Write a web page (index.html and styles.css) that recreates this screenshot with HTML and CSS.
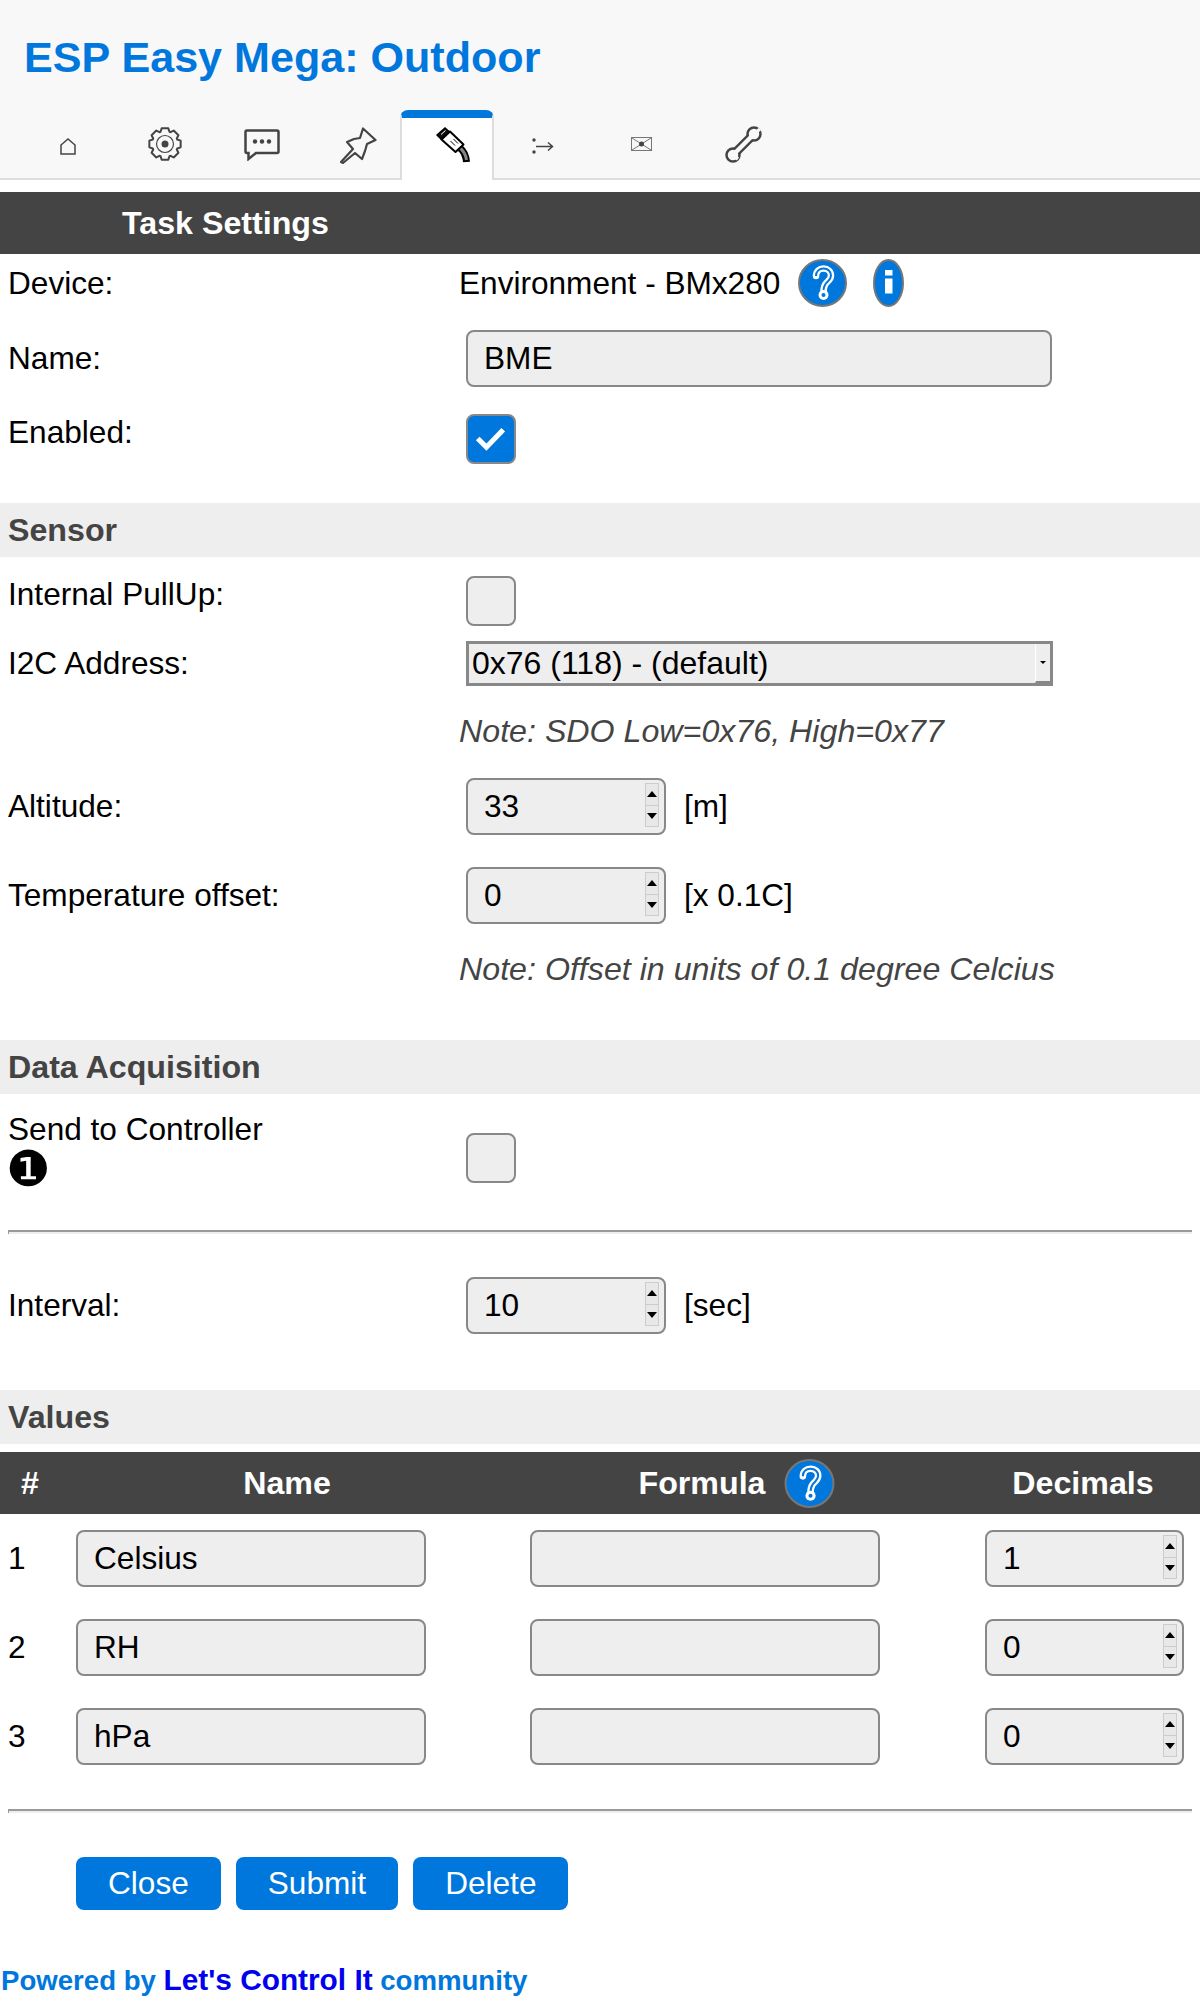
FILE: index.html
```html
<!DOCTYPE html>
<html lang="en">
<head>
    <meta charset="UTF-8">
    <meta name="viewport" content="width=device-width, initial-scale=1.0">
    <title>ESP Easy Mega: Outdoor</title>
    <link rel="stylesheet" href="styles.css">
</head>
<body>
    <svg class="defs" width="0" height="0">
        <symbol id="helpIcon" viewBox="0 0 49 48">
            <ellipse cx="24.5" cy="24" rx="23.5" ry="23" fill="#07d" stroke="#777" stroke-width="2"/>
            <path d="M18 17C18 12 21.500 9.500 25.500 9.500C30 9.500 33 12.500 33 16.500C33 21 29.500 22 27.500 25C26 27 25.500 29 25.500 33" fill="none" stroke="#fff" stroke-width="6.500" stroke-linecap="round"/>
            <path d="M18 17C18 12 21.500 9.500 25.500 9.500C30 9.500 33 12.500 33 16.500C33 21 29.500 22 27.500 25C26 27 25.500 29 25.500 33" fill="none" stroke="#07d" stroke-width="2"/>
            <circle cx="25.500" cy="36" r="5" fill="#fff"/>
            <circle cx="25.500" cy="36" r="2" fill="#07d"/>
        </symbol>
    </svg>

    <header class="top">
        <h1 class="title">ESP Easy Mega: Outdoor</h1>
        <nav class="tabs">
            <a class="tab tab-home">
                <svg width="16" height="17" viewBox="0 0 16 17"><path d="M1 16V7L8 1L15 7V16Z" fill="none" stroke="#444" stroke-width="1.500"/></svg>
            </a>
            <a class="tab tab-gear">
                <svg width="34" height="34" viewBox="-17 -17 34 34">
                    <polygon points="15.650,3.330 12.220,4.450 11.780,5.490 13.420,8.710 8.710,13.420 5.490,11.780 4.450,12.220 3.330,15.650 -3.330,15.650 -4.450,12.220 -5.490,11.780 -8.710,13.420 -13.420,8.710 -11.780,5.490 -12.220,4.450 -15.650,3.330 -15.650,-3.330 -12.220,-4.450 -11.780,-5.490 -13.420,-8.710 -8.710,-13.420 -5.490,-11.780 -4.450,-12.220 -3.330,-15.650 3.330,-15.650 4.450,-12.220 5.490,-11.780 8.710,-13.420 13.420,-8.710 11.780,-5.490 12.220,-4.450 15.650,-3.330" fill="none" stroke="#444" stroke-width="2" stroke-linejoin="round"/>
                    <circle r="8.500" fill="none" stroke="#444" stroke-width="1.200"/>
                    <circle r="3.500" fill="#444"/>
                </svg>
            </a>
            <a class="tab tab-chat">
                <svg width="36" height="32" viewBox="0 0 36 32">
                    <path d="M3 1.500H33Q34.500 1.500 34.500 3V22.500Q34.500 24 33 24H12L4.500 30V24H3Q1.500 24 1.500 22.500V3Q1.500 1.500 3 1.500Z" fill="none" stroke="#444" stroke-width="2.500"/>
                    <circle cx="11" cy="12.500" r="2.200" fill="#444"/>
                    <circle cx="18" cy="12.500" r="2.200" fill="#444"/>
                    <circle cx="25" cy="12.500" r="2.200" fill="#444"/>
                </svg>
            </a>
            <a class="tab tab-pin">
                <svg width="37" height="37" viewBox="0 0 37 37">
                    <path d="M1 35L13 22L7 15L14 12L20 11L23 1.500L35.500 13L27 17L25 24L22 32L15 26L3 36Z" fill="none" stroke="#444" stroke-width="2.200" stroke-linejoin="round"/>
                </svg>
            </a>
            <a class="tab tab-plug active">
                <svg width="34" height="36" viewBox="0 0 34 36">
                    <path d="M24 21C29 25 30 29 30.500 35" fill="none" stroke="#000" stroke-width="7"/>
                    <path d="M24 21C29 25 30 29 30.500 33" fill="none" stroke="#888" stroke-width="3"/>
                    <polygon points="1,8 9,1 13,4.500 5,12" fill="#111" stroke="#000" stroke-width="1.500"/>
                    <path d="M5 7.500L9.500 3.500" stroke="#fff" stroke-width="1"/>
                    <polygon points="5.500,12.500 14,4.500 27.500,17.500 19.500,25" fill="#fff" stroke="#000" stroke-width="2" stroke-linejoin="round"/>
                    <path d="M14.500 14L19 18.500M17.500 12L22 16.500" stroke="#000" stroke-width="1"/>
                </svg>
            </a>
            <a class="tab tab-arrow">
                <svg width="22" height="16" viewBox="0 0 22 16">
                    <circle cx="2" cy="2" r="1.700" fill="#444"/>
                    <circle cx="2" cy="14" r="1.700" fill="#444"/>
                    <path d="M4 8.500H20M16 4.500L20.500 8.500L16 12.500" fill="none" stroke="#444" stroke-width="1.500"/>
                </svg>
            </a>
            <a class="tab tab-mail">
                <svg width="21" height="14" viewBox="0 0 21 14">
                    <rect x="0.500" y="0.500" width="20" height="13" fill="none" stroke="#777"/>
                    <path d="M1 1L20 13M20 1L1 13" stroke="#777"/>
                    <circle cx="10.500" cy="7" r="2.500" fill="#444"/>
                </svg>
            </a>
            <a class="tab tab-wrench">
                <svg width="37" height="37" viewBox="0 0 37 37">
                    <path d="M9 28L28 9" stroke="#444" stroke-width="9"/>
                    <circle cx="29" cy="8" r="6.500" fill="#f8f8f8" stroke="#444" stroke-width="2.500"/>
                    <circle cx="8" cy="29" r="6.500" fill="#f8f8f8" stroke="#444" stroke-width="2.500"/>
                    <path d="M8 29L29 8" stroke="#f8f8f8" stroke-width="4.500"/>
                    <path d="M30 7L35 3M9 30L13 33" stroke="#f8f8f8" stroke-width="3.500"/>
                </svg>
            </a>
        </nav>
    </header>

    <main class="page">
        <div class="bar bar-task">Task Settings</div>

        <div class="row row-device">
            <span class="label">Device:</span>
            <span class="value">Environment - BMx280</span>
            <svg class="help help-device"><use href="#helpIcon"/></svg>
            <svg class="info" width="31" height="48" viewBox="0 0 31 48">
                <ellipse cx="15.500" cy="24" rx="14.500" ry="23" fill="#07d" stroke="#777" stroke-width="2"/>
                <rect x="12" y="11" width="7.500" height="5.500" fill="#fff"/>
                <rect x="12" y="19.500" width="7.500" height="15" fill="#fff"/>
            </svg>
        </div>

        <div class="row row-name">
            <label class="label" for="taskName">Name:</label>
            <input class="field field-wide" id="taskName" type="text" value="BME">
        </div>

        <div class="row row-enabled">
            <span class="label label-check">Enabled:</span>
            <label class="check">
                <input type="checkbox" checked>
                <span class="checkmark">
                    <svg width="50" height="50" viewBox="0 0 48 49"><path d="M11 24L19.500 32.500L36 15.500" fill="none" stroke="#fff" stroke-width="5"/></svg>
                </span>
            </label>
        </div>

        <div class="bar bar-section bar-sensor">Sensor</div>

        <div class="row row-pullup">
            <span class="label label-check">Internal PullUp:</span>
            <label class="check">
                <input type="checkbox">
                <span class="checkmark"></span>
            </label>
        </div>

        <div class="row row-i2c">
            <label class="label" for="i2cAddress">I2C Address:</label>
            <span class="select-box">
                <select class="select" id="i2cAddress">
                    <option>0x76 (118) - (default)</option>
                    <option>0x77 (119)</option>
                </select>
                <span class="select-arrow"></span>
            </span>
        </div>

        <div class="note note-sdo">Note: SDO Low=0x76, High=0x77</div>

        <div class="row row-altitude">
            <label class="label" for="altitude">Altitude:</label>
            <span class="field field-number">
                <input class="number-input" id="altitude" type="number" value="33">
                <span class="spin"><span class="spin-btn"><i class="arrow-up"></i></span><span class="spin-btn"><i class="arrow-down"></i></span></span>
            </span>
            <span class="unit">[m]</span>
        </div>

        <div class="row row-offset">
            <label class="label" for="tempOffset">Temperature offset:</label>
            <span class="field field-number">
                <input class="number-input" id="tempOffset" type="number" value="0">
                <span class="spin"><span class="spin-btn"><i class="arrow-up"></i></span><span class="spin-btn"><i class="arrow-down"></i></span></span>
            </span>
            <span class="unit">[x 0.1C]</span>
        </div>

        <div class="note note-offset">Note: Offset in units of 0.1 degree Celcius</div>

        <div class="bar bar-section bar-data">Data Acquisition</div>

        <div class="row row-send">
            <span class="label">Send to Controller<br><span class="bullet">❶</span></span>
            <label class="check">
                <input type="checkbox">
                <span class="checkmark"></span>
            </label>
        </div>

        <hr class="divider divider-send">

        <div class="row row-interval">
            <label class="label" for="interval">Interval:</label>
            <span class="field field-number">
                <input class="number-input" id="interval" type="number" value="10">
                <span class="spin"><span class="spin-btn"><i class="arrow-up"></i></span><span class="spin-btn"><i class="arrow-down"></i></span></span>
            </span>
            <span class="unit">[sec]</span>
        </div>

        <div class="bar bar-section bar-values">Values</div>

        <table class="values">
            <thead>
                <tr>
                    <th class="col-num">#</th>
                    <th class="col-name">Name</th>
                    <th class="col-formula">
                        <span class="th-inner">Formula <svg class="help help-formula"><use href="#helpIcon"/></svg></span>
                    </th>
                    <th class="col-dec">Decimals</th>
                </tr>
            </thead>
            <tbody>
                <tr>
                    <td class="cell-num">1</td>
                    <td><input class="field field-cell" type="text" value="Celsius"></td>
                    <td><input class="field field-cell" type="text"></td>
                    <td>
                        <span class="field field-number field-dec">
                            <input class="number-input" type="number" value="1">
                            <span class="spin"><span class="spin-btn"><i class="arrow-up"></i></span><span class="spin-btn"><i class="arrow-down"></i></span></span>
                        </span>
                    </td>
                </tr>
                <tr>
                    <td class="cell-num">2</td>
                    <td><input class="field field-cell" type="text" value="RH"></td>
                    <td><input class="field field-cell" type="text"></td>
                    <td>
                        <span class="field field-number field-dec">
                            <input class="number-input" type="number" value="0">
                            <span class="spin"><span class="spin-btn"><i class="arrow-up"></i></span><span class="spin-btn"><i class="arrow-down"></i></span></span>
                        </span>
                    </td>
                </tr>
                <tr>
                    <td class="cell-num">3</td>
                    <td><input class="field field-cell" type="text" value="hPa"></td>
                    <td><input class="field field-cell" type="text"></td>
                    <td>
                        <span class="field field-number field-dec">
                            <input class="number-input" type="number" value="0">
                            <span class="spin"><span class="spin-btn"><i class="arrow-up"></i></span><span class="spin-btn"><i class="arrow-down"></i></span></span>
                        </span>
                    </td>
                </tr>
            </tbody>
        </table>

        <hr class="divider divider-values">

        <div class="buttons">
            <a class="button">Close</a>
            <a class="button">Submit</a>
            <a class="button">Delete</a>
        </div>
    </main>

    <footer class="footer">Powered by <a class="footer-link">Let's Control It</a> community</footer>
</body>
</html>
```

FILE: styles.css
```css
* {
    box-sizing: border-box;
}

body {
    margin: 0;
    font-family: "Liberation Sans", Arial, sans-serif;
    font-size: 31.6px;
    color: #000;
    background-color: #fff;
}

.defs {
    display: block;
    height: 0;
}

/* header + tabs */
.top {
    background-color: #f8f8f8;
    border-bottom: 2px solid #ddd;
    height: 180px;
    padding-top: 32px;
}

.title {
    margin: 0 0 28px 24px;
    font-size: 43.100px;
    line-height: 50px;
    font-weight: bold;
    color: #07d;
}

.tabs {
    display: flex;
    padding-left: 20px;
    height: 70px;
}

.tab {
    display: flex;
    align-items: flex-start;
    justify-content: center;
    height: 70px;
}

.tab-home { width: 96px; padding-top: 28px; }
.tab-gear { width: 98px; padding-top: 17px; }
.tab-chat { width: 96px; padding-top: 19px; }
.tab-pin { width: 90px; padding-left: 6px; padding-top: 17px; }
.tab-arrow { width: 98px; padding-top: 28px; }
.tab-mail { width: 98px; padding-top: 27px; }
.tab-wrench { width: 106px; padding-top: 16px; }

.tab.active {
    width: 94px;
    background-color: #fff;
    border-left: 2px solid #ddd;
    border-right: 2px solid #ddd;
    border-top: 8px solid #07d;
    border-radius: 8px 8px 0 0;
    padding-left: 12px;
    padding-top: 9px;
}

/* bars */
.page {
    padding-top: 12px;
}

.bar {
    padding-left: 8px;
    font-size: 32.200px;
    font-weight: bold;
    display: flex;
    align-items: center;
}

.bar-task {
    height: 62px;
    padding-left: 122px;
    background-color: #444;
    color: #fff;
}

.bar-section {
    height: 54px;
    background-color: #eee;
    color: #444;
}

.bar-sensor { margin-top: 39px; }
.bar-data { margin-top: 52px; }
.bar-values { margin-top: 56px; }

/* form rows */
.row {
    display: flex;
    align-items: center;
    padding-left: 8px;
}

.label {
    flex: 0 0 451px;
}

.label-check {
    margin-top: -13px;
}

.value {
    margin-right: 18px;
}

.row-device { height: 58px; }
.row-name { margin-top: 18px; }
.row-enabled { margin-top: 27px; }
.row-pullup { margin-top: 19px; }
.row-i2c { margin-top: 15px; }
.row-altitude { margin-top: 28px; }
.row-offset { margin-top: 32px; }
.row-send { height: 97px; margin-top: 15px; }
.row-interval { margin-top: 43px; }

.row-send .label {
    align-self: flex-start;
    line-height: 40px;
}

.bullet {
    display: inline-block;
    height: 40px;
    margin-left: -2px;
    font-family: "DejaVu Sans", sans-serif;
    font-size: 46px;
    line-height: 40px;
    transform: scale(1.08);
    transform-origin: left center;
}

.help {
    width: 49px;
    height: 48px;
}

.help-device {
    margin-right: 26px;
}

.help-formula {
    width: 51px;
    height: 49px;
    margin-left: 19px;
}

.info {
    display: block;
}

.row-name .field,
.row-enabled .check,
.row-pullup .check,
.row-send .check,
.row .field-number {
    margin-left: 7px;
}

.field {
    height: 57px;
    padding: 0 16px;
    border: 2px solid #888;
    border-radius: 8px;
    background-color: #eee;
    font-family: inherit;
    font-size: inherit;
    color: #000;
}

.field-wide {
    width: 586px;
}

.field-number {
    display: flex;
    width: 200px;
    padding-right: 5px;
}

.number-input {
    flex: 1;
    min-width: 0;
    padding: 0;
    border: 0;
    background: transparent;
    font-family: inherit;
    font-size: inherit;
    color: #000;
    appearance: textfield;
}

.number-input::-webkit-inner-spin-button {
    display: none;
}

.spin {
    display: flex;
    flex-direction: column;
    flex: 0 0 14px;
    height: 44px;
    margin-top: 3px;
    border: 1px solid #ccc;
    background-color: #e8e8e8;
}

.spin-btn {
    flex: 1;
    display: flex;
    align-items: center;
    justify-content: center;
}

.spin-btn + .spin-btn {
    border-top: 1px solid #ccc;
}

.arrow-up,
.arrow-down {
    display: block;
    width: 0;
    height: 0;
    border-left: 5px solid transparent;
    border-right: 5px solid transparent;
}

.arrow-up {
    border-bottom: 6px solid #000;
}

.arrow-down {
    border-top: 6px solid #000;
}

.field-cell {
    display: block;
    width: 350px;
}

.field-dec {
    width: 199px;
    margin-left: 25px;
}

.unit {
    margin-left: 18px;
}

.select-box {
    display: flex;
    margin-left: 7px;
    width: 587px;
    height: 45px;
    border: 3px solid #888;
    background-color: #eee;
}

.select {
    flex: 1;
    min-width: 0;
    height: 37px;
    padding: 0 3px;
    border: 0;
    background: transparent;
    font-family: inherit;
    font-size: 32px;
    color: #000;
    appearance: none;
}

.select-arrow {
    display: flex;
    align-items: center;
    justify-content: center;
    flex: 0 0 15px;
    border-left: 1px solid #fff;
    border-bottom: 2px solid #888;
}

.select-arrow::after {
    content: "";
    display: block;
    border-left: 3px solid transparent;
    border-right: 3px solid transparent;
    border-top: 3px solid #000;
}

.check {
    display: block;
    width: 50px;
    height: 50px;
}

.check input {
    display: none;
}

.checkmark {
    display: block;
    width: 50px;
    height: 50px;
    border: 2px solid #888;
    border-radius: 8px;
    background-color: #eee;
}

.check input:checked + .checkmark {
    background-color: #07d;
}

.checkmark svg {
    display: block;
    margin: -2px;
}

.note {
    margin-left: 459px;
    height: 38px;
    font-size: 32.200px;
    line-height: 38px;
    font-style: italic;
    color: #444;
}

.note-sdo { margin-top: 26px; }
.note-offset { margin-top: 26px; }

.divider {
    margin: 0 8px;
    height: 4px;
    border: 0;
    border-top: 2px solid #999;
    border-left: 1px solid #999;
    background-color: #eee;
}

.divider-send { margin-top: 24px; }
.divider-values { margin-top: 28px; }

/* values table */
.values {
    width: 100%;
    margin-top: 8px;
    border-collapse: collapse;
    table-layout: fixed;
}

.values th {
    height: 62px;
    padding: 0;
    background-color: #444;
    color: #fff;
    font-size: 32.200px;
    font-weight: bold;
}

.values td {
    padding: 16px;
}

.col-num { width: 60px; }
.col-name { width: 454px; }
.col-formula { width: 446px; }

.values .col-dec {
    padding-left: 6px;
}

.th-inner {
    display: inline-flex;
    align-items: center;
}

.values .cell-num {
    padding-left: 8px;
}

.values td:last-child {
    padding-left: 0;
}

/* buttons */
.buttons {
    display: flex;
    gap: 15px;
    margin: 44px 0 0 76px;
}

.button {
    display: block;
    height: 53px;
    line-height: 53px;
    padding: 0 32px;
    border-radius: 8px;
    background-color: #07d;
    color: #fff;
}

.footer {
    margin-top: 53px;
    padding-left: 1px;
    font-size: 27.600px;
    font-weight: bold;
    color: #07d;
}

.footer-link {
    font-size: 29.800px;
    color: #00e;
}
```
